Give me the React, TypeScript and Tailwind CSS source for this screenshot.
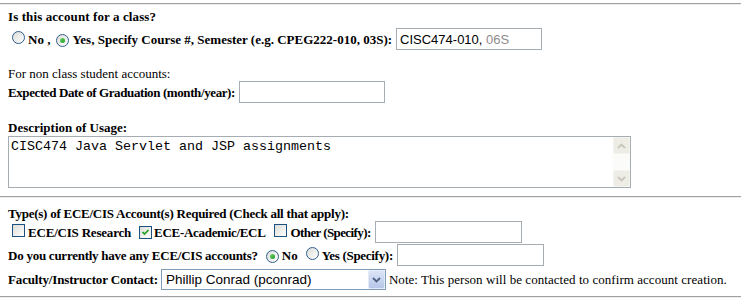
import * as React from 'react'

const serif = "font-['Liberation_Serif','Times_New_Roman',serif]"

function Hr() {
  return <div className="h-[2px] border-t border-[#a0a0a0] border-b border-b-[#ededed]" />
}

function Radio({ checked = false }: { checked?: boolean }) {
  return (
    <span className="inline-flex h-[13px] w-[13px] shrink-0 items-center justify-center rounded-full border border-[#2f5e8f] bg-gradient-to-br from-[#dcdcd7] to-white">
      {checked && (
        <span className="h-[5px] w-[5px] rounded-full bg-gradient-to-br from-[#6cd36c] to-[#1e9a1e]" />
      )}
    </span>
  )
}

function Checkbox({ checked = false }: { checked?: boolean }) {
  return (
    <span className="inline-flex h-[13px] w-[13px] shrink-0 items-center justify-center border border-[#1c5180] bg-gradient-to-br from-[#dcdcd7] to-white">
      {checked && (
        <svg width="9" height="9" viewBox="0 0 9 9">
          <path d="M1.5 4 L3.5 6 L7.5 2" fill="none" stroke="#21a121" strokeWidth="1.7" />
        </svg>
      )}
    </span>
  )
}

function TextBox({ w = 'w-[146px]', children }: { w?: string; children?: React.ReactNode }) {
  return (
    <div className={`${w} flex h-[22px] shrink-0 items-center border border-[#a5acb2] bg-white px-[3px] font-['Liberation_Sans',Arial,sans-serif] text-[13px] font-normal tracking-normal text-black`}>
      {children}
    </div>
  )
}

function Chevron({ up = false, color }: { up?: boolean; color: string }) {
  return (
    <svg width="9" height="6" viewBox="0 0 9 6">
      <path
        d={up ? 'M1 5 L4.5 1.5 L8 5' : 'M1 1 L4.5 4.5 L8 1'}
        fill="none"
        stroke={color}
        strokeWidth="1.8"
      />
    </svg>
  )
}

export default function App() {
  return (
    <div className={`${serif} h-[298px] w-[741px] overflow-hidden bg-white text-[13px] leading-[15px] text-black`}>
      <div className="pt-[3px]">
        <Hr />
      </div>
      <div className="px-2">
        <div className="flex h-[23px] items-center font-bold tracking-[0.1px]">Is this account for a class?</div>

        <div className="flex h-[22px] items-center font-bold">
          <span className="ml-[4px] mr-[3px]"><Radio /></span>
          <span>No ,</span>
          <span className="ml-[6px] mr-[3px]"><Radio checked /></span>
          <span>Yes, Specify Course #, Semester (e.g. CPEG222-010, 03S):</span>
          <span className="ml-1">
            <TextBox>
              <span>CISC474-010,&nbsp;</span>
              <span className="text-[#8c8c8c]">06S</span>
            </TextBox>
          </span>
        </div>

        <div className="flex h-[31px] items-end">For non class student accounts:</div>

        <div className="flex h-[22px] items-center font-bold">
          <span className="tracking-[-0.4px]">Expected Date of Graduation (month/year):</span>
          <span className="ml-1"><TextBox /></span>
        </div>

        <div className="flex h-[33px] items-end pb-[1px] font-bold">Description of Usage:</div>

        <div className="flex h-[52px] w-[623px] border border-[#a5acb2] bg-white">
          <div className="flex-1 px-[2px] pt-[2px] font-['Liberation_Mono','Courier_New',monospace] text-[13.33px] leading-[15px]">
            CISC474 Java Servlet and JSP assignments
          </div>
          <div className="flex w-[17px] flex-col bg-[#fbfbf9]">
            <div className="flex h-[17px] items-center justify-center rounded-[2px] border border-[#f3f3ef] bg-[#eeede5]">
              <Chevron up color="#c9c7ba" />
            </div>
            <div className="flex-1" />
            <div className="flex h-[17px] items-center justify-center rounded-[2px] border border-[#f3f3ef] bg-[#eeede5]">
              <Chevron color="#c9c7ba" />
            </div>
          </div>
        </div>
      </div>

      <div className="mt-[8px]">
        <Hr />
      </div>

      <div className="px-2">
        <div className="flex h-[23px] items-end font-bold tracking-[-0.25px]">
          Type(s) of ECE/CIS Account(s) Required (Check all that apply):
        </div>

        <div className="flex h-[22px] items-center font-bold">
          <span className="ml-[4px] mr-[3px]"><Checkbox /></span>
          <span className="tracking-[-0.2px]">ECE/CIS Research</span>
          <span className="ml-[8px] mr-[2px]"><Checkbox checked /></span>
          <span className="tracking-[-0.3px]">ECE-Academic/ECL</span>
          <span className="ml-[8px] mr-[4px]"><Checkbox /></span>
          <span className="tracking-[-0.6px]">Other (Specify):</span>
          <span className="ml-1"><TextBox w="w-[147px]" /></span>
        </div>

        <div className="flex h-[24px] items-center font-bold">
          <span className="tracking-[-0.25px]">Do you currently have any ECE/CIS accounts?</span>
          <span className="ml-[8px] mr-[3px]"><Radio checked /></span>
          <span>No</span>
          <span className="ml-[8px] mr-[3px]"><Radio /></span>
          <span className="tracking-[-0.3px]">Yes (Specify):</span>
          <span className="ml-1"><TextBox w="w-[147px]" /></span>
        </div>

        <div className="flex h-[25px] items-center">
          <span className="font-bold tracking-[-0.15px]">Faculty/Instructor Contact:</span>
          <div className="ml-[3px] flex h-[21px] w-[225px] items-center border border-[#7f9db9] bg-white">
            <span className="flex-1 pl-[4px] font-['Liberation_Sans',Arial,sans-serif] text-[13.5px]">
              Phillip Conrad (pconrad)
            </span>
            <span className="flex h-[19px] w-[17px] items-center justify-center rounded-[2px] border border-[#e3e9f7] bg-gradient-to-b from-[#dbe4f7] to-[#b7c6e8]">
              <Chevron color="#4d6185" />
            </span>
          </div>
          <span className="ml-[3px] tracking-[0.05px]">Note: This person will be contacted to confirm account creation.</span>
        </div>
      </div>

      <div className="mt-[4px]">
        <Hr />
      </div>
    </div>
  )
}
